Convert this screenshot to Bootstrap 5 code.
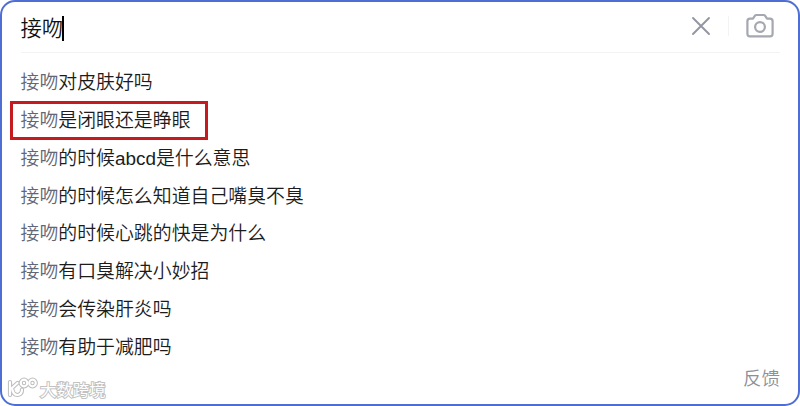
<!DOCTYPE html>
<html lang="zh-CN">
<head>
  <meta charset="UTF-8">
  <meta name="viewport" content="width=device-width, initial-scale=1">
  <title>搜索</title>
  <link rel="stylesheet" href="https://cdn.jsdelivr.net/npm/bootstrap@5.3.0/dist/css/bootstrap.min.css">
  <style>
    body {
      font-family: "Liberation Sans", "Noto Sans CJK SC", sans-serif;
      font-weight: 350;
      background: #fff;
      color: #1c1c1c;
      overflow: hidden;
    }
    .search-box {
      height: 406px;
      border: 2px solid #4e6ed4;
      border-radius: 15px;
      padding: 0 18px 0 18.5px;
    }
    .search-head {
      height: 51px;
      border-bottom: 1px solid #f3f3f5;
    }
    .query {
      padding-top: 3px;
      font-size: 21.3px;
      line-height: 28px;
      color: #111;
    }
    .caret {
      width: 2px;
      height: 25px;
      margin: 2px 0 0 -1px;
      background: #000;
    }
    .head-tools {
      padding: 0 6px 2px 0;
    }
    .tool-sep {
      width: 1px;
      height: 20px;
      margin: 0 17px;
      background: #f3f3f5;
    }
    .suggest {
      padding-top: 11px;
      font-size: 18.9px;
    }
    .suggest li {
      height: 37.86px;
      line-height: 37.86px;
      white-space: nowrap;
    }
    .latin {
      font-weight: 400;
    }
    .typed {
      color: #626675;
    }
    .marked::before {
      content: "";
      position: absolute;
      left: -10.5px;
      top: -1px;
      width: 198px;
      height: 39px;
      border: 3px solid #c51a1e;
    }
    .feedback {
      right: 18px;
      bottom: 13px;
      font-size: 18.5px;
      line-height: 24px;
      color: #8c9099;
    }
    .watermark {
      left: 5px;
      bottom: 3px;
    }
    .watermark text {
      font-family: "Noto Sans CJK SC", sans-serif;
      font-size: 16.4px;
      font-weight: 400;
    }
  </style>
</head>
<body>
  <div class="search-box position-relative">
    <div class="search-head d-flex align-items-center justify-content-between">
      <div class="d-flex align-items-center">
        <span class="query">接吻</span>
        <span class="caret"></span>
      </div>
      <div class="head-tools d-flex align-items-center">
        <svg width="20" height="20" viewBox="0 0 20 20" fill="none" stroke="#9296a0" stroke-width="1.9" stroke-linecap="round">
          <path d="M2 2L18 18M18 2L2 18"/>
        </svg>
        <span class="tool-sep"></span>
        <svg width="28" height="26" viewBox="0 0 28 26" fill="none" stroke="#a5a8b1" stroke-width="2.2" stroke-linejoin="round">
          <path d="M4 5.6H7L8.8 2.9Q9.4 2 10.4 2H17.6Q18.6 2 19.2 2.9L21 5.6H24Q26.6 5.6 26.6 8.2V20.8Q26.6 23.4 24 23.4H4Q1.4 23.4 1.4 20.8V8.2Q1.4 5.6 4 5.6Z"/>
          <circle cx="14" cy="14" r="4.9"/>
        </svg>
      </div>
    </div>

    <ul class="suggest list-unstyled mb-0">
      <li><span class="typed">接吻</span>对皮肤好吗</li>
      <li class="marked position-relative"><span class="typed">接吻</span>是闭眼还是睁眼</li>
      <li><span class="typed">接吻</span>的时候<span class="latin">abcd</span>是什么意思</li>
      <li><span class="typed">接吻</span>的时候怎么知道自己嘴臭不臭</li>
      <li><span class="typed">接吻</span>的时候心跳的快是为什么</li>
      <li><span class="typed">接吻</span>有口臭解决小妙招</li>
      <li><span class="typed">接吻</span>会传染肝炎吗</li>
      <li><span class="typed">接吻</span>有助于减肥吗</li>
    </ul>

    <span class="feedback position-absolute">反馈</span>

    <svg class="watermark position-absolute" width="106" height="24" viewBox="0 0 106 24">
      <g fill="none" stroke-linecap="round" stroke-linejoin="round">
        <g stroke="#bcbcbc" stroke-width="4.2">
          <path d="M3 5V18M10.5 6L5 11Q6 18 10.5 18Q15 17.5 15 12.5"/>
          <circle cx="17" cy="6" r="3.3"/>
          <circle cx="25.5" cy="6" r="3.3"/>
        </g>
        <g stroke="#fff" stroke-width="2.2">
          <path d="M3 5V18M10.5 6L5 11Q6 18 10.5 18Q15 17.5 15 12.5"/>
          <circle cx="17" cy="6" r="3.3"/>
          <circle cx="25.5" cy="6" r="3.3"/>
        </g>
      </g>
      <text x="33" y="18.5" fill="#fff" stroke="#c2c2c2" stroke-width="2" paint-order="stroke">大数跨境</text>
    </svg>
  </div>

  <script src="https://cdn.jsdelivr.net/npm/bootstrap@5.3.0/dist/js/bootstrap.bundle.min.js"></script>
</body>
</html>
